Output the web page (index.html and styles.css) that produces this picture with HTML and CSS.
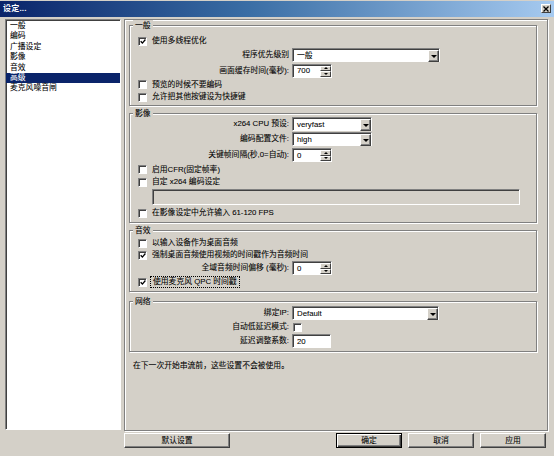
FILE: index.html
```html
<!DOCTYPE html>
<html>
<head>
<meta charset="utf-8">
<title>设定...</title>
<link rel="stylesheet" href="styles.css">
</head>
<body>
<div class="window">
  <div class="titlebar">
    <span class="title">设定...</span>
    <span class="close"><svg width="6" height="6" viewBox="0 0 6 6"><path d="M0.5 0.5 L5.5 5.5 M5.5 0.5 L0.5 5.5" stroke="#000" stroke-width="1.3"/></svg></span>
  </div>
  <div class="content">
    <ul class="list">
      <li>一般</li>
      <li>编码</li>
      <li>广播设定</li>
      <li>影像</li>
      <li>音效</li>
      <li class="sel">高级</li>
      <li>麦克风噪音闸</li>
    </ul>
    <div class="side">
      <div class="panel">
        <div class="group">
          <div class="legend">一般</div>
          <div class="rows g1">
            <div class="row h12"><span class="cb"><svg class="tick" width="7" height="7" viewBox="0 0 7 7"><path d="M0.8 3.2 L2.8 5.3 L6.3 1.2" fill="none" stroke="#000" stroke-width="1.5"/></svg></span><span class="cbl">使用多线程优化</span></div>
            <div class="row h16"><span class="lbl">程序优先级别</span><span class="select w148"><span class="val">一般</span><span class="drop"><i class="down"></i></span></span></div>
            <div class="row h15"><span class="lbl">画面缓存时间(毫秒):</span><span class="spin"><span class="val">700</span><span class="spinbtns"><span class="sb"><i class="up"></i></span><span class="sb"><i class="down small"></i></span></span></span></div>
            <div class="row h13"><span class="cb"></span><span class="cbl">预览的时候不要编码</span></div>
            <div class="row h12"><span class="cb"></span><span class="cbl">允许把其他按键设为快捷键</span></div>
          </div>
        </div>
        <div class="group gap7">
          <div class="legend">影像</div>
          <div class="rows g2">
            <div class="row h14"><span class="lbl">x264 CPU 预设:</span><span class="select w80"><span class="val">veryfast</span><span class="drop"><i class="down"></i></span></span></div>
            <div class="row h16"><span class="lbl">编码配置文件:</span><span class="select w80"><span class="val">high</span><span class="drop"><i class="down"></i></span></span></div>
            <div class="row h16"><span class="lbl">关键帧间隔(秒,0=自动):</span><span class="spin"><span class="val">0</span><span class="spinbtns"><span class="sb"><i class="up"></i></span><span class="sb"><i class="down small"></i></span></span></span></div>
            <div class="row h13"><span class="cb"></span><span class="cbl">启用CFR(固定帧率)</span></div>
            <div class="row h12"><span class="cb"></span><span class="cbl">自定 x264 编码设定</span></div>
            <div class="row h18"><span class="field"></span></div>
            <div class="row h14"><span class="cb"></span><span class="cbl">在影像设定中允许输入 61-120 FPS</span></div>
          </div>
        </div>
        <div class="group gap7">
          <div class="legend">音效</div>
          <div class="rows g3">
            <div class="row h12"><span class="cb"></span><span class="cbl">以输入设备作为桌面音频</span></div>
            <div class="row h12"><span class="cb"><svg class="tick" width="7" height="7" viewBox="0 0 7 7"><path d="M0.8 3.2 L2.8 5.3 L6.3 1.2" fill="none" stroke="#000" stroke-width="1.5"/></svg></span><span class="cbl">强制桌面音频使用视频的时间戳作为音频时间</span></div>
            <div class="row h14"><span class="lbl">全域音频时间偏移 (毫秒):</span><span class="spin"><span class="val">0</span><span class="spinbtns"><span class="sb"><i class="up"></i></span><span class="sb"><i class="down small"></i></span></span></span></div>
            <div class="row h14"><span class="cb"><svg class="tick" width="7" height="7" viewBox="0 0 7 7"><path d="M0.8 3.2 L2.8 5.3 L6.3 1.2" fill="none" stroke="#000" stroke-width="1.5"/></svg></span><span class="cbl focus">使用麦克风 QPC 时间戳</span></div>
          </div>
        </div>
        <div class="group gap9">
          <div class="legend">网络</div>
          <div class="rows g4">
            <div class="row h14"><span class="lbl">绑定IP:</span><span class="select w147"><span class="val">Default</span><span class="drop"><i class="down"></i></span></span></div>
            <div class="row h14"><span class="lbl">自动低延迟模式:</span><span class="cb solo"></span></div>
            <div class="row h14"><span class="lbl">延迟调整系数:</span><span class="input"><span class="val">20</span></span></div>
          </div>
        </div>
        <p class="note">在下一次开始串流前，这些设置不会被使用。</p>
      </div>
      <div class="buttons">
        <span class="btn wide">默认设置</span>
        <div class="btngroup">
          <span class="btn default">确定</span>
          <span class="btn">取消</span>
          <span class="btn">应用</span>
        </div>
      </div>
    </div>
  </div>
</div>
</body>
</html>
```

FILE: styles.css
```css
* { box-sizing: border-box; margin: 0; padding: 0; }
html, body { width: 554px; height: 456px; overflow: hidden; }
body {
  background: #d4d0c8;
  font-family: "Liberation Sans", "Noto Sans CJK SC", sans-serif;
  font-size: 7.8px;
  line-height: 1;
  color: #000;
  -webkit-text-stroke: 0.07px #000;
}
.window {
  display: flex;
  flex-direction: column;
  height: 456px;
  padding-top: 1px;
}
.titlebar {
  height: 16px;
  background: linear-gradient(to right, #0a246a 0%, #3a6ea5 45%, #a6caf0 100%);
  display: flex;
  align-items: center;
  justify-content: space-between;
  padding: 0 3px 0 3px;
  color: #fff;
  -webkit-text-stroke: 0;
}
.title { font-weight: bold; font-size: 8px; letter-spacing: 0.2px; }
.close {
  width: 10px;
  height: 9px;
  background: #d4d0c8;
  border: 1px solid;
  border-color: #fff #404040 #404040 #fff;
  display: flex;
  align-items: center;
  justify-content: center;
  margin-top: -1px;
}
.content {
  display: flex;
  margin-top: 2px;
  padding: 0 6px 0 5px;
}
.list {
  list-style: none;
  width: 116px;
  height: 411px;
  background: #fff;
  border: 1px solid;
  border-color: #808080 #fff #fff #808080;
  box-shadow: inset 1px 1px 0 #404040;
  padding-top: 1px;
}
.list li {
  height: 10.4px;
  line-height: 10.4px;
  padding-left: 4px;
  white-space: nowrap;
}
.list li.sel { background: #0a246a; color: #fff; -webkit-text-stroke: 0.07px #fff; }
.side {
  margin-left: 3px;
  width: 424px;
  display: flex;
  flex-direction: column;
}
.panel {
  height: 412px;
  border: 1px solid #808080;
  box-shadow: inset 1px 1px 0 #fff, 1px 1px 0 #fff;
  padding: 5px 0 0 4px;
}
.group {
  width: 408px;
  border: 1px solid #808080;
  box-shadow: inset 1px 1px 0 #fff, 1px 1px 0 #fff;
  padding: 0 0 0 8px;
}
.gap7 { margin-top: 7px; }
.gap9 { margin-top: 9px; }
.legend {
  width: fit-content;
  height: 11px;
  line-height: 11px;
  background: #d4d0c8;
  padding: 0 2px;
  margin: -6px 0 -5px -5px;
}
.rows.g1 { padding: 9px 0 2px 0; }
.rows.g2 { padding: 3px 0 2px 0; }
.rows.g3 { padding: 6px 0 2px 0; }
.rows.g4 { padding: 4px 0 3px 0; }
.row {
  display: flex;
  align-items: center;
  white-space: nowrap;
}
.h12 { height: 12px; }
.h13 { height: 13px; }
.h14 { height: 14px; }
.h15 { height: 15px; }
.h16 { height: 16px; }
.h18 { height: 18px; }
.lbl {
  width: 151px;
  text-align: right;
  margin-right: 3px;
}
.cb {
  width: 9px;
  height: 9px;
  flex: none;
  background: #fff;
  border: 1px solid;
  border-color: #808080 #fff #fff #808080;
  box-shadow: inset 1px 1px 0 #404040;
  display: flex;
  align-items: center;
  justify-content: center;
}
.cb .tick { display: block; margin: 1px 0 0 1px; }
.cb.solo { margin-left: 1px; }
.cbl { margin-left: 5px; }
.cbl.focus {
  outline: 1px dotted #000;
  outline-offset: 1px;
  margin-left: 5px;
  padding: 0 1px;
}
.select, .spin, .input {
  display: flex;
  height: 14px;
  background: #fff;
  border: 1px solid;
  border-color: #808080 #fff #fff #808080;
  box-shadow: inset 1px 1px 0 #404040;
  padding: 1px 0 0 1px;
  align-items: stretch;
}
.w148 { width: 148px; }
.w147 { width: 147px; }
.w80 { width: 80px; }
.spin { width: 40px; }
.input { width: 39px; }
.val {
  flex: 1;
  padding-left: 3px;
  display: flex;
  align-items: center;
}
.drop {
  width: 11px;
  height: 12px;
  background: #d4d0c8;
  border: 1px solid;
  border-color: #fff #404040 #404040 #fff;
  box-shadow: inset -1px -1px 0 #808080;
  display: flex;
  align-items: center;
  justify-content: center;
}
.down {
  display: block;
  width: 0;
  height: 0;
  border-left: 3px solid transparent;
  border-right: 3px solid transparent;
  border-top: 3px solid #000;
}
.up {
  display: block;
  width: 0;
  height: 0;
  border-left: 2px solid transparent;
  border-right: 2px solid transparent;
  border-bottom: 2px solid #000;
}
.down.small {
  border-left-width: 2px;
  border-right-width: 2px;
  border-top-width: 2px;
}
.spinbtns {
  width: 11px;
  display: flex;
  flex-direction: column;
}
.sb {
  flex: 1;
  background: #d4d0c8;
  border: 1px solid;
  border-color: #fff #404040 #404040 #fff;
  display: flex;
  align-items: center;
  justify-content: center;
}
.field {
  margin-left: 14px;
  width: 368px;
  height: 16px;
  background: #d4d0c8;
  border: 1px solid;
  border-color: #808080 #fff #fff #808080;
  box-shadow: inset 1px 1px 0 #404040;
}
.note {
  margin-top: 8px;
  padding-left: 4px;
  height: 12px;
  line-height: 12px;
}
.buttons {
  display: flex;
  justify-content: space-between;
  margin-top: 2px;
  padding-right: 2px;
}
.btngroup { display: flex; gap: 6px; }
.btn {
  width: 66px;
  height: 15px;
  background: #d4d0c8;
  border: 1px solid;
  border-color: #fff #404040 #404040 #fff;
  box-shadow: inset -1px -1px 0 #808080;
  display: flex;
  align-items: center;
  justify-content: center;
}
.btn.wide { width: 106px; }
.btn.default {
  border-color: #000;
  box-shadow: inset 1px 1px 0 #fff, inset -1px -1px 0 #404040, inset -2px -2px 0 #808080;
}
```
